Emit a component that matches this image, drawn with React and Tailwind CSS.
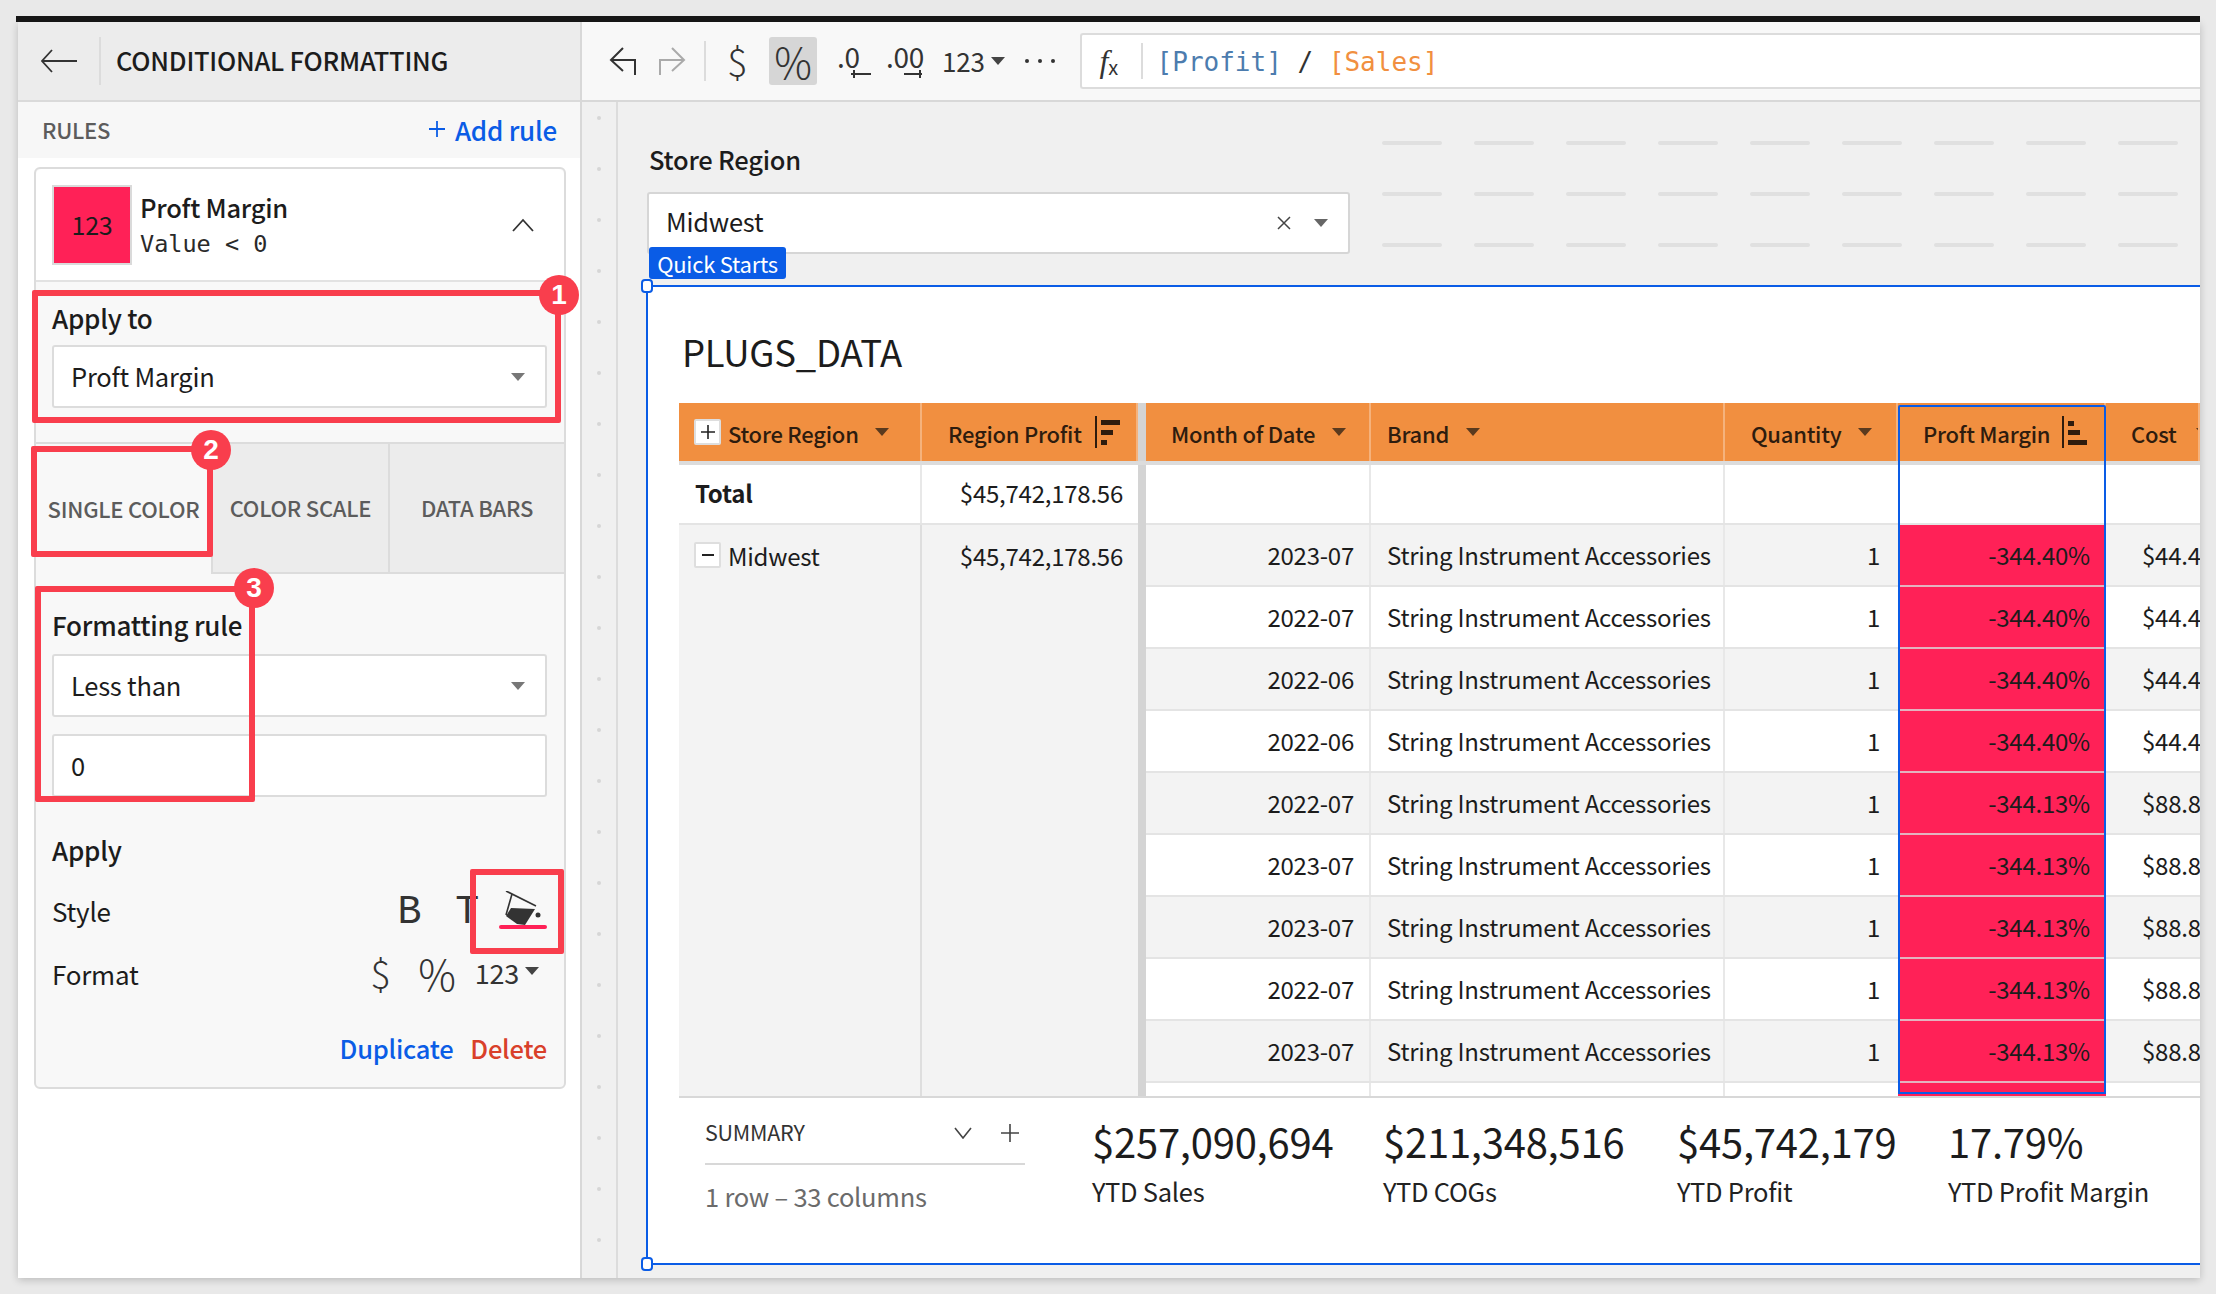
const rows = [
  ['2023-07', '-344.40%', '$44.48'],
  ['2022-07', '-344.40%', '$44.48'],
  ['2022-06', '-344.40%', '$44.48'],
  ['2022-06', '-344.40%', '$44.48'],
  ['2022-07', '-344.13%', '$88.88'],
  ['2023-07', '-344.13%', '$88.88'],
  ['2023-07', '-344.13%', '$88.88'],
  ['2022-07', '-344.13%', '$88.88'],
  ['2023-07', '-344.13%', '$88.88'],
]

const kpis = [
  ['$257,090,694', 'YTD Sales', 'w-[291px]'],
  ['$211,348,516', 'YTD COGs', 'w-[294px]'],
  ['$45,742,179', 'YTD Profit', 'w-[271px]'],
  ['17.79%', 'YTD Profit Margin', 'w-[220px]'],
]

const Caret = ({ className = 'border-t-[#777]' }) => (
  <span className={`inline-block w-0 h-0 border-l-[7px] border-r-[7px] border-t-[8px] border-l-transparent border-r-transparent ${className}`} />
)

const Select = ({ label }) => (
  <div className="flex items-center justify-between h-[63px] ml-[16px] mr-[17px] pl-[17px] pr-[20px] bg-white border-2 border-[#dcdcdc] rounded-[3px] text-[25.5px] text-[#1c1c1c]">
    <span>{label}</span>
    <Caret />
  </div>
)

const SortIcon = ({ reverse }) => (
  <svg className="shrink-0" width="28" height="34" viewBox="0 0 28 34" fill="#2e1c0e">
    <rect x="1" y="1" width="2" height="32" />
    {reverse ? (
      <>
        <rect x="7" y="6" width="6" height="5" />
        <rect x="7" y="15" width="12" height="5" />
        <rect x="7" y="25" width="19" height="5" />
      </>
    ) : (
      <>
        <rect x="7" y="5" width="19" height="5" />
        <rect x="7" y="15" width="12" height="5" />
        <rect x="7" y="25" width="6" height="5" />
      </>
    )}
  </svg>
)

const Sidebar = () => (
  <aside className="w-[564px] shrink-0 flex flex-col bg-white border-r-2 border-[#d8d8d8] relative">
    <div className="h-[80px] shrink-0 flex items-center bg-[#ececec] border-b-2 border-[#dadada]">
      <svg className="ml-[23px] shrink-0" width="36" height="24" viewBox="0 0 36 24" fill="none" stroke="#333" strokeWidth="1.8">
        <path d="M36 12H1M11 1 1 12l10 11" />
      </svg>
      <div className="ml-[22px] w-[2px] h-[48px] bg-[#dcdcdc]" />
      <span className="ml-[15px] pb-[2px] text-[25.5px] font-medium text-[#1c1c1c] leading-none">CONDITIONAL FORMATTING</span>
    </div>

    <div className="h-[56px] shrink-0 flex items-center justify-between pl-[24px] pr-[23px] pb-[2px] bg-[#f7f7f7]">
      <span className="text-[22px] font-medium text-[#5c5c5c]">RULES</span>
      <span className="flex items-center gap-[10px] text-[26px] font-medium text-[#0a5ce6]">
        <svg width="16" height="16" viewBox="0 0 18 18" stroke="#0a5ce6" strokeWidth="2">
          <path d="M9 0v18M0 9h18" />
        </svg>
        Add rule
      </span>
    </div>

    <div className="mt-[9px] ml-[16px] mr-[14px] h-[922px] bg-[#f8f8f8] border-2 border-[#dcdcdc] rounded-[6px] flex flex-col">
      <div className="h-[113px] shrink-0 flex items-center bg-white border-b-2 border-[#e2e2e2] rounded-t-[6px] pl-[16px] pr-[30px]">
        <div className="w-[80px] h-[80px] flex items-center justify-center bg-[#ff2157] border-2 border-[#dadada] text-[25px] text-[#1c1c1c]">123</div>
        <div className="ml-[8px] flex-1">
          <div className="text-[25.5px] font-medium leading-[38px] text-[#1c1c1c]">Proft Margin</div>
          <div className="font-['DejaVu_Sans_Mono',monospace] tracking-normal text-[23.5px] leading-[36px] text-[#2a2a2a]">{'Value < 0'}</div>
        </div>
        <svg width="22" height="14" viewBox="0 0 22 14" fill="none" stroke="#333" strokeWidth="1.8">
          <path d="M1 13 11 2l10 11" />
        </svg>
      </div>

      <div className="h-[160px] shrink-0 pt-[18px]">
        <div className="mx-[16px] h-[45px] text-[26px] font-medium leading-[36px] text-[#1c1c1c]">Apply to</div>
        <Select label="Proft Margin" />
      </div>

      <div className="h-[132px] shrink-0 flex border-t-2 border-[#dcdcdc]">
        <div className="w-[175px] flex items-center justify-center pb-[2px] text-[22px] font-medium text-[#5c5c5c]">SINGLE COLOR</div>
        <div className="w-[177px] flex items-center justify-center pb-[2px] text-[22px] font-medium text-[#5c5c5c] bg-[#ececec] border-l-2 border-b-2 border-[#dcdcdc]">COLOR SCALE</div>
        <div className="flex-1 flex items-center justify-center pb-[2px] text-[22px] font-medium text-[#5c5c5c] bg-[#ececec] border-l-2 border-b-2 border-[#dcdcdc]">DATA BARS</div>
      </div>

      <div className="pt-[32px]">
        <div className="mx-[16px] h-[48px] text-[26px] font-medium leading-[38px] text-[#1c1c1c]">Formatting rule</div>
        <Select label="Less than" />
        <div className="mt-[17px] flex items-center h-[63px] ml-[16px] mr-[17px] pl-[17px] bg-white border-2 border-[#dcdcdc] rounded-[3px] text-[25.5px] text-[#1c1c1c]">0</div>
      </div>

      <div className="mt-[34px] mx-[16px] text-[26px] font-medium leading-[38px] text-[#1c1c1c]">Apply</div>

      <div className="mt-[19px] ml-[16px] mr-[17px] h-[44px] flex items-center text-[26px] text-[#1c1c1c]">
        <span>Style</span>
        <span className="ml-auto pt-[5px] font-['Liberation_Mono',monospace] text-[40px] leading-none text-[#333]">B</span>
        <span className="ml-[34px] pt-[5px] font-['Liberation_Mono',monospace] text-[40px] leading-none text-[#333]">T</span>
        <span className="ml-[20px] flex flex-col items-center">
          <svg width="36" height="35" viewBox="0 0 36 35" fill="#333">
            <path d="M1 0 31 15M7 3 1 24" fill="none" stroke="#333" strokeWidth="1.6" />
            <path d="M6 17 30 18 20 34 12 33 1 25Z" />
            <circle cx="33" cy="24" r="2.5" />
          </svg>
          <span className="-mt-[1px] w-[48px] h-[4px] rounded-sm bg-[#ff2157]" />
        </span>
      </div>

      <div className="mt-[17px] ml-[16px] mr-[17px] h-[48px] flex items-center text-[26px] text-[#1c1c1c]">
        <span>Format</span>
        <span className="ml-auto text-[38px] font-light leading-none text-[#333]">$</span>
        <span className="ml-[28px] text-[42px] font-light leading-none text-[#333]">%</span>
        <span className="ml-[19px] pb-[2px] text-[27px] leading-none text-[#333]">123</span>
        <span className="ml-[6px] mr-[8px] mb-[4px] flex"><Caret className="border-t-[#444]" /></span>
      </div>

      <div className="mt-[32px] ml-[16px] mr-[17px] flex justify-end gap-[17px] text-[25.5px] font-medium">
        <span className="text-[#0a5ce6]">Duplicate</span>
        <span className="text-[#d9402a]">Delete</span>
      </div>
    </div>
  </aside>
)

const Toolbar = () => (
  <div className="h-[80px] shrink-0 flex items-center bg-[#f8f8f8] border-b-2 border-[#d8d8d8] text-[#333]">
    <svg className="ml-[27px]" width="28" height="28" viewBox="0 0 28 28" fill="none" stroke="#333" strokeWidth="2">
      <path d="M14 1 2 13l12 11M2 13h24v15" />
    </svg>
    <svg className="ml-[21px]" width="28" height="28" viewBox="0 0 28 28" fill="none" stroke="#aaa" strokeWidth="2">
      <path d="M14 1l12 12-12 11M26 13H2v15" />
    </svg>
    <div className="ml-[18px] w-[2px] h-[40px] bg-[#dcdcdc]" />
    <span className="ml-[20px] w-[22px] text-center text-[38px] font-light leading-none">$</span>
    <span className="ml-[21px] w-[48px] h-[48px] flex items-center justify-center bg-[#d6d6d6] rounded-[3px] text-[42px] font-light leading-none">%</span>
    <span className="ml-[20px] w-[34px] flex flex-col">
      <span className="text-[28px] leading-[26px]">.0</span>
      <svg className="ml-[12px]" width="22" height="10" viewBox="0 0 22 10" fill="none" stroke="#333" strokeWidth="2">
        <path d="M22 5H2M5 1v8" />
      </svg>
    </span>
    <span className="ml-[15px] w-[38px] flex flex-col">
      <span className="text-[28px] leading-[26px]">.00</span>
      <svg className="ml-[18px]" width="20" height="10" viewBox="0 0 20 10" fill="none" stroke="#333" strokeWidth="2">
        <path d="M0 5h18M16 1v8" />
      </svg>
    </span>
    <span className="ml-[18px] text-[26px] leading-none">123</span>
    <span className="ml-[6px] flex"><Caret className="border-t-[#444]" /></span>
    <span className="ml-[20px] w-[30px] flex justify-between">
      <span className="w-[4px] h-[4px] rounded-full bg-[#333]" />
      <span className="w-[4px] h-[4px] rounded-full bg-[#333]" />
      <span className="w-[4px] h-[4px] rounded-full bg-[#333]" />
    </span>
    <div className="ml-[25px] flex-1 h-[56px] flex items-center bg-white border-y-2 border-l-2 border-[#dcdcdc] rounded-l-[3px]">
      <span className="ml-[18px] w-[26px] flex items-end text-[#333]">
        <span className="font-['Liberation_Serif',serif] italic text-[32px] leading-none">f</span>
        <span className="text-[20px] leading-[20px]">x</span>
      </span>
      <div className="ml-[15px] w-[2px] h-[36px] bg-[#dcdcdc]" />
      <div className="ml-[14px] pt-[2px] font-['DejaVu_Sans_Mono',monospace] tracking-normal text-[26px] whitespace-pre">
        <span className="text-[#4c7cae]">[Profit]</span>
        <span className="text-[#333]"> / </span>
        <span className="text-[#f18f40]">[Sales]</span>
      </div>
    </div>
  </div>
)

const HeaderCell = ({ className, children }) => (
  <div className={`h-full flex items-center bg-[#f18f40] border-r-2 border-[#f5b27c] whitespace-nowrap text-[22px] font-medium text-[#2e1c0e] ${className}`}>{children}</div>
)

const Table = () => (
  <div className="relative ml-[31px] border-b-2 border-[#d8d8d8]">
    <div className="flex h-[62px] border-b-4 border-[#dcdcdc]">
      <HeaderCell className="w-[243px] pl-[15px]">
        <span className="w-[27px] h-[26px] shrink-0 flex items-center justify-center bg-white border-2 border-[#dedede] rounded-[2px] mr-[7px]">
          <svg width="14" height="14" viewBox="0 0 14 14" stroke="#222" strokeWidth="1.6"><path d="M7 0v14M0 7h14" /></svg>
        </span>
        <span className="pt-[2px]">Store Region</span>
        <span className="ml-[16px] flex"><Caret className="border-t-[#5a3a1e]" /></span>
      </HeaderCell>
      <HeaderCell className="w-[216px] border-r-0 pl-[26px] gap-[12px]">
        <span className="pt-[2px]">Region Profit</span>
        <SortIcon />
      </HeaderCell>
      <div className="w-[8px] bg-[#d4d4d4]" />
      <HeaderCell className="w-[225px] pl-[25px]">
        <span className="pt-[2px]">Month of Date</span>
        <span className="ml-[17px] flex"><Caret className="border-t-[#5a3a1e]" /></span>
      </HeaderCell>
      <HeaderCell className="w-[354px] pl-[16px]">
        <span className="pt-[2px]">Brand</span>
        <span className="ml-[17px] flex"><Caret className="border-t-[#5a3a1e]" /></span>
      </HeaderCell>
      <HeaderCell className="w-[173px] pl-[26px]">
        <span className="pt-[2px]">Quantity</span>
        <span className="ml-[17px] flex"><Caret className="border-t-[#5a3a1e]" /></span>
      </HeaderCell>
      <HeaderCell className="w-[208px] pl-[25px] gap-[11px] border-r-0">
        <span className="pt-[2px]">Proft Margin</span>
        <SortIcon reverse />
      </HeaderCell>
      <HeaderCell className="flex-1 pl-[25px] overflow-hidden border-r-0">
        <span className="pt-[2px]">Cost</span>
        <span className="ml-[19px] flex shrink-0"><Caret className="border-t-[#5a3a1e]" /></span>
      </HeaderCell>
    </div>
    <div className="flex h-[631px] bg-white text-[24px] text-[#1c1c1c] overflow-hidden">
      <div className="w-[459px] flex flex-col bg-[#f3f3f3]">
        <div className="h-[60px] shrink-0 flex items-center bg-white border-b-2 border-[#e4e4e4]">
          <div className="w-[243px] h-full flex items-center pl-[16px] pb-[2px] font-semibold border-r-2 border-[#e8e8e8]">Total</div>
          <div className="flex-1 text-right pr-[15px] pb-[2px]">$45,742,178.56</div>
        </div>
        <div className="flex-1 flex">
          <div className="w-[243px] flex items-start pt-[13px] pl-[15px] border-r-2 border-[#dedede]">
            <span className="w-[27px] h-[26px] flex items-center justify-center bg-white border-2 border-[#dedede] rounded-[2px] mt-[4px] mr-[7px]">
              <span className="w-[12px] h-[2px] bg-[#222]" />
            </span>
            Midwest
          </div>
          <div className="flex-1 text-right pr-[15px] pt-[13px]">$45,742,178.56</div>
        </div>
      </div>
      <div className="w-[8px] bg-[#d4d4d4]" />
      <div className="flex-1 flex flex-col min-w-0">
        <div className="h-[60px] shrink-0 flex border-b-2 border-[#e4e4e4]">
          <div className="w-[225px] border-r-2 border-[#e8e8e8]" />
          <div className="w-[354px] border-r-2 border-[#e8e8e8]" />
          <div className="w-[173px]" />
        </div>
        {rows.map(([month, margin, cost], i) => (
          <div key={i} className={`h-[62px] shrink-0 flex items-center border-b-2 border-[#e4e4e4] ${i % 2 === 0 ? 'bg-[#f3f3f3]' : 'bg-white'}`}>
            <div className="w-[225px] h-full flex items-center justify-end pr-[15px] border-r-2 border-[#e8e8e8]">{month}</div>
            <div className="w-[354px] h-full flex items-center pl-[16px] border-r-2 border-[#e8e8e8] whitespace-nowrap">String Instrument Accessories</div>
            <div className="w-[173px] h-full flex items-center justify-end pr-[18px]">1</div>
            <div className="w-[208px] h-[62px] -mb-[2px] flex items-center justify-end pr-[16px] bg-[#ff2157] border-b-2 border-[#e3b3bf]">{margin}</div>
            <div className="flex-1 h-full flex items-center pl-[36px] overflow-hidden">{cost}</div>
          </div>
        ))}
        <div className="h-[13px] shrink-0 flex">
          <div className="w-[225px] border-r-2 border-[#e8e8e8]" />
          <div className="w-[354px] border-r-2 border-[#e8e8e8]" />
          <div className="w-[173px]" />
          <div className="w-[208px] bg-[#ff2157]" />
        </div>
      </div>
    </div>
    {/* selected column outline */}
    <div className="absolute left-[1219px] top-[2px] bottom-[2px] w-[208px] border-2 border-[#0a5ce6] rounded-t-[2px] pointer-events-none" />
  </div>
)

const Summary = () => (
  <div className="flex flex-1 ml-[31px]">
    <div className="w-[346px] pl-[26px] shrink-0">
      <div className="h-[67px] w-[320px] flex items-center border-b-2 border-[#d8d8d8] text-[#333] pt-[4px]">
        <span className="text-[21.5px]">SUMMARY</span>
        <svg className="ml-[149px]" width="18" height="12" viewBox="0 0 18 12" fill="none" stroke="#444" strokeWidth="1.6"><path d="M1 1l8 10 8-10" /></svg>
        <svg className="ml-[29px]" width="18" height="18" viewBox="0 0 18 18" stroke="#444" strokeWidth="1.6"><path d="M9 0v18M0 9h18" /></svg>
      </div>
      <div className="mt-[14px] text-[25.5px] leading-[34px] text-[#6b6b6b]">1 row – 33 columns</div>
    </div>
    <div className="flex ml-[67px] pt-[21px]">
      {kpis.map(([value, label, width]) => (
        <div key={label} className={`${width} shrink-0`}>
          <div className="text-[40px] leading-[44px] text-[#1c1c1c]">{value}</div>
          <div className="mt-[10px] text-[25.5px] leading-[36px] text-[#222]">{label}</div>
        </div>
      ))}
    </div>
  </div>
)

export default function App() {
  return (
    <div className="relative w-[2216px] h-[1294px] overflow-hidden bg-[#e9e9e9] pt-[16px] pl-[16px] tracking-[-0.015em] font-['Noto_Sans_CJK_SC','Noto_Sans',sans-serif]">
      <div className="w-[2184px] h-[6px] bg-[#171717]" />
      <div className="ml-[2px] w-[2182px] h-[1256px] flex shadow-[0_2px_8px_rgba(0,0,0,0.2)]">
        <Sidebar />
        <div className="w-[1618px] flex flex-col">
          <Toolbar />
          <div className="flex-1 flex bg-[#f0f0f0]">
            <div className="w-[36px] shrink-0 border-r-2 border-[#dcdcdc] flex flex-col items-center gap-[47px] pt-[14px]">
              {Array.from({ length: 23 }, (_, i) => (
                <span key={i} className="w-[4px] h-[4px] rounded-full bg-[#d6d6d6]" />
              ))}
            </div>
            <div className="flex-1 min-w-0 flex flex-col">
              <div className="h-[183px] shrink-0 flex pl-[29px]">
                <div className="w-[703px] shrink-0 pt-[39px]">
                  <div className="ml-[2px] text-[25.5px] font-medium leading-[36px] text-[#1c1c1c]">Store Region</div>
                  <div className="mt-[15px] h-[62px] flex items-center bg-white border-2 border-[#d6d6d6] rounded-[3px] pl-[17px] pr-[20px] text-[25.5px] text-[#1c1c1c]">
                    <span className="pb-[3px]">Midwest</span>
                    <svg className="ml-auto" width="14" height="14" viewBox="0 0 14 14" stroke="#444" strokeWidth="1.5"><path d="M1 1l12 12M13 1 1 13" /></svg>
                    <span className="ml-[23px] flex"><Caret className="border-t-[#666]" /></span>
                  </div>
                </div>
                <div className="ml-[32px] pt-[39px] flex flex-col gap-[47px]">
                  {[0, 1, 2].map(r => (
                    <div key={r} className="flex gap-[32px]">
                      {Array.from({ length: 9 }, (_, i) => (
                        <span key={i} className="w-[60px] h-[4px] rounded-sm bg-[#e0e0e0]" />
                      ))}
                    </div>
                  ))}
                </div>
              </div>
              <div className="relative ml-[28px] h-[980px] flex flex-col bg-white border-y-2 border-l-2 border-[#0a5ce6]">
                <span className="absolute -top-[40px] left-[1px] h-[32px] w-[137px] flex items-center justify-center rounded-[3px] bg-[#0a5ce6] text-white text-[22px] leading-none">Quick Starts</span>
                <span className="absolute -top-[8px] -left-[7px] w-[12px] h-[14px] bg-white border-2 border-[#0a5ce6] rounded-[4px]" />
                <span className="absolute -bottom-[8px] -left-[7px] w-[12px] h-[14px] bg-white border-2 border-[#0a5ce6] rounded-[4px]" />
                <div className="h-[116px] shrink-0 flex items-center pl-[34px] pt-[14px] text-[36.5px] leading-none text-[#1c1c1c]">PLUGS_DATA</div>
                <Table />
                <Summary />
              </div>
            </div>
          </div>
        </div>
      </div>

      {/* annotation boxes */}
      <div className="absolute left-[32px] top-[290px] w-[529px] h-[133px] border-[6px] border-[#f93e4d] rounded-[2px] pointer-events-none" />
      <div className="absolute left-[31px] top-[446px] w-[182px] h-[111px] border-[6px] border-[#f93e4d] rounded-[2px] pointer-events-none" />
      <div className="absolute left-[35px] top-[586px] w-[220px] h-[216px] border-[6px] border-[#f93e4d] rounded-[2px] pointer-events-none" />
      <div className="absolute left-[470px] top-[869px] w-[94px] h-[85px] border-[6px] border-[#f93e4d] rounded-[2px] pointer-events-none" />
      {[['1', 'left-[539px] top-[275px]'], ['2', 'left-[191px] top-[430px]'], ['3', 'left-[234px] top-[568px]']].map(([n, pos]) => (
        <span key={n} className={`absolute ${pos} w-[40px] h-[40px] flex items-center justify-center rounded-full bg-[#f93e4d] text-white text-[28px] font-bold leading-none font-['Liberation_Sans',sans-serif]`}>{n}</span>
      ))}
    </div>
  )
}
